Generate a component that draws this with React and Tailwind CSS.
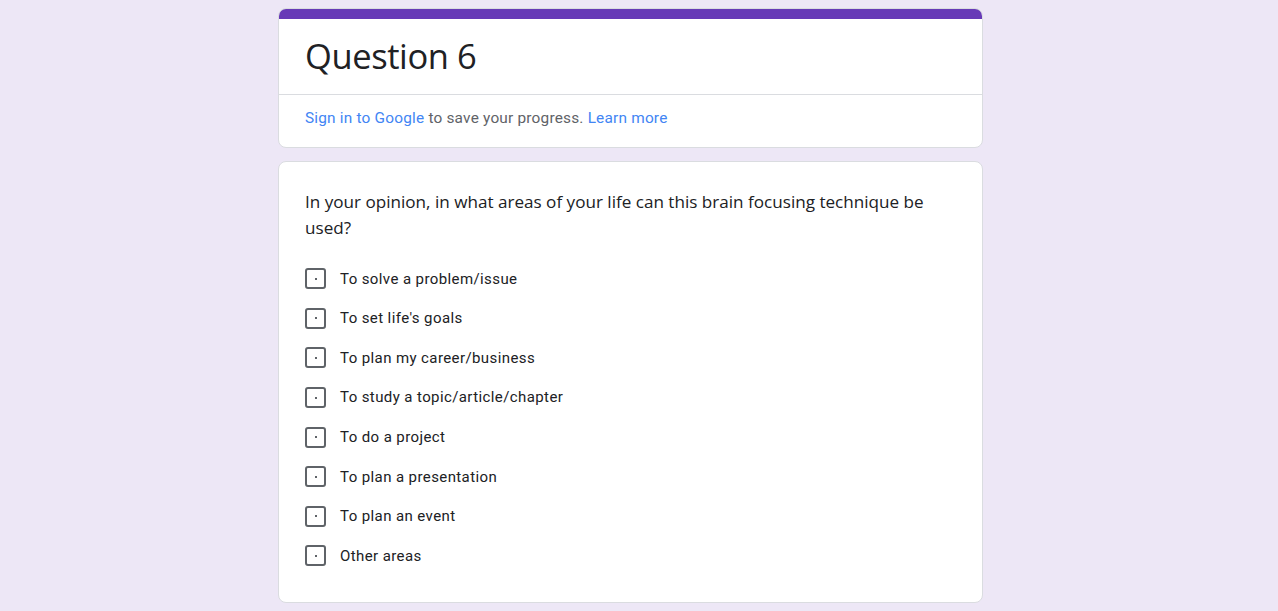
import React from 'react';

const options = [
  'To solve a problem/issue',
  "To set life's goals",
  'To plan my career/business',
  'To study a topic/article/chapter',
  'To do a project',
  'To plan a presentation',
  'To plan an event',
  'Other areas',
];

function Checkbox() {
  return (
    <div className="w-[21px] h-[21px] shrink-0 rounded-[3px] border-2 border-[#5f6368] flex items-center justify-center">
      <div className="w-[2px] h-[2px] bg-[#5f6368]" />
    </div>
  );
}

export default function App() {
  return (
    <div className="min-h-screen bg-[#ede7f6] pt-2 pb-3 pr-[17px] font-['Roboto',sans-serif]">
      <div className="w-[705px] mx-auto flex flex-col gap-[13px]">
        <div className="bg-white rounded-lg border border-[#dadce0] overflow-hidden">
          <div className="h-[10px] bg-[#673ab7]" />
          <div className="px-[26px] h-[76px] flex items-center border-b border-[#dadce0]">
            <h1 className="text-[34.5px] leading-[44px] text-[#202124] font-['Open_Sans',sans-serif] tracking-[-0.4px] -mt-[2px]">Question 6</h1>
          </div>
          <div className="px-[26px] h-[52px] flex items-center text-[15.4px] text-[#5f6368] tracking-[0.2px]">
            <span className="-mt-[4px]">
              <span className="text-[#4285f4]">Sign in to Google</span> to save your progress.{' '}
              <span className="text-[#4285f4]">Learn more</span>
            </span>
          </div>
        </div>
        <div className="bg-white rounded-lg border border-[#dadce0] px-[26px] pt-[27px] pb-[26px]">
          <p className="text-[17.1px] leading-[26px] text-[#202124] font-['Open_Sans',sans-serif] pr-4">
            In your opinion, in what areas of your life can this brain focusing technique be used?
          </p>
          <div className="mt-[18px] flex flex-col">
            {options.map((o) => (
              <div key={o} className="flex items-center gap-[14px] h-[39.6px]">
                <Checkbox />
                <span className="text-[15px] text-[#202124] tracking-[0.4px]">{o}</span>
              </div>
            ))}
          </div>
        </div>
      </div>
    </div>
  );
}
